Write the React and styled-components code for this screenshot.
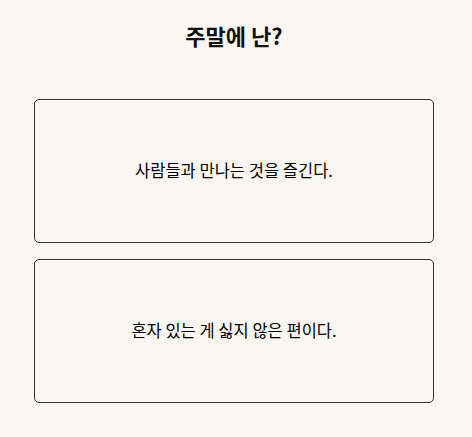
import React from 'react';
import styled, { createGlobalStyle } from 'styled-components';

const GlobalStyle = createGlobalStyle`
  body {
    margin: 0;
    background-color: #faf7f2;
    font-family: "Noto Sans CJK KR", "Noto Sans", sans-serif;
    color: #111;
  }
`;

const Page = styled.div`
  display: flex;
  flex-direction: column;
  padding: 19px 38px 0 34px;
`;

const Title = styled.h1`
  margin: 0;
  text-align: center;
  font-size: 22px;
  font-weight: 700;
  line-height: 32px;
`;

const Choices = styled.div`
  display: flex;
  flex-direction: column;
  gap: 16px;
  margin-top: 48px;
`;

const Choice = styled.button`
  display: flex;
  align-items: center;
  justify-content: center;
  height: 144px;
  width: 400px;
  padding: 0 0 2px;
  background: transparent;
  border: 1px solid #333;
  border-radius: 5px;
  font-family: inherit;
  font-size: 16.5px;
  font-weight: 400;
  color: #000;
  cursor: pointer;
`;

const options = ['사람들과 만나는 것을 즐긴다.', '혼자 있는 게 싫지 않은 편이다.'];

const App = () => {
  return (
    <>
      <GlobalStyle />
      <Page>
        <Title>주말에 난?</Title>
        <Choices>
          {options.map((text) => (
            <Choice key={text}>{text}</Choice>
          ))}
        </Choices>
      </Page>
    </>
  );
};

export default App;
